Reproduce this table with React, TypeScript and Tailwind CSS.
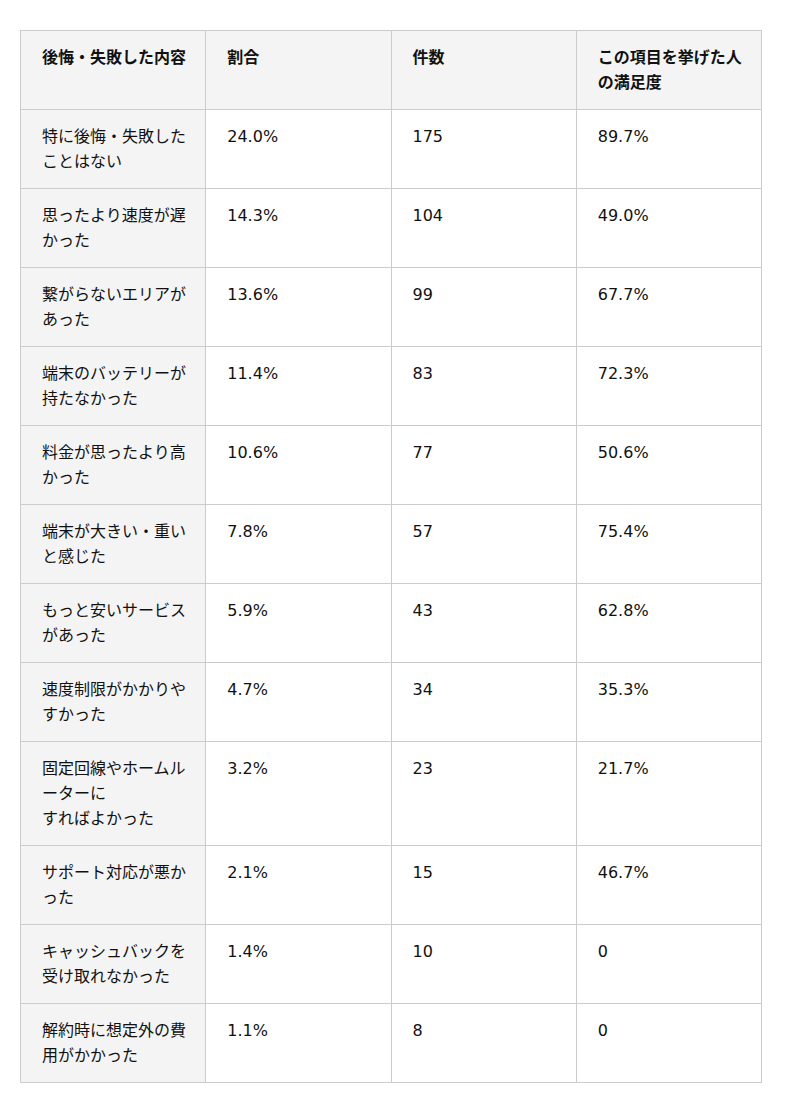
import React from 'react';

const rows: [string, string, string, string][] = [
  ['特に後悔・失敗したことはない', '24.0%', '175', '89.7%'],
  ['思ったより速度が遅かった', '14.3%', '104', '49.0%'],
  ['繋がらないエリアがあった', '13.6%', '99', '67.7%'],
  ['端末のバッテリーが持たなかった', '11.4%', '83', '72.3%'],
  ['料金が思ったより高かった', '10.6%', '77', '50.6%'],
  ['端末が大きい・重いと感じた', '7.8%', '57', '75.4%'],
  ['もっと安いサービスがあった', '5.9%', '43', '62.8%'],
  ['速度制限がかかりやすかった', '4.7%', '34', '35.3%'],
  ['固定回線やホームルーターに\nすればよかった', '3.2%', '23', '21.7%'],
  ['サポート対応が悪かった', '2.1%', '15', '46.7%'],
  ['キャッシュバックを受け取れなかった', '1.4%', '10', '0'],
  ['解約時に想定外の費用がかかった', '1.1%', '8', '0'],
];

const headers = ['後悔・失敗した内容', '割合', '件数', 'この項目を挙げた人の満足度'];

const cell = 'border border-[#cccccc] pl-[21px] pr-[18px] py-[14px] align-top text-left';

export default function App() {
  return (
    <div
      className="min-h-screen bg-white pt-[30px] pl-[20px] text-[16px] leading-[25px] text-[#111111]"
      style={{ fontFamily: '"DejaVu Sans", "Noto Sans CJK JP", sans-serif' }}
    >
      <table className="w-[742px] table-fixed border-collapse">
        <thead>
          <tr className="bg-[#f4f4f4]">
            {headers.map((h) => (
              <th key={h} className={`${cell} font-bold`}>
                {h}
              </th>
            ))}
          </tr>
        </thead>
        <tbody>
          {rows.map((r) => (
            <tr key={r[0]}>
              <td className={`${cell} bg-[#f4f4f4] whitespace-pre-line`}>{r[0]}</td>
              <td className={cell}>{r[1]}</td>
              <td className={cell}>{r[2]}</td>
              <td className={cell}>{r[3]}</td>
            </tr>
          ))}
        </tbody>
      </table>
    </div>
  );
}
